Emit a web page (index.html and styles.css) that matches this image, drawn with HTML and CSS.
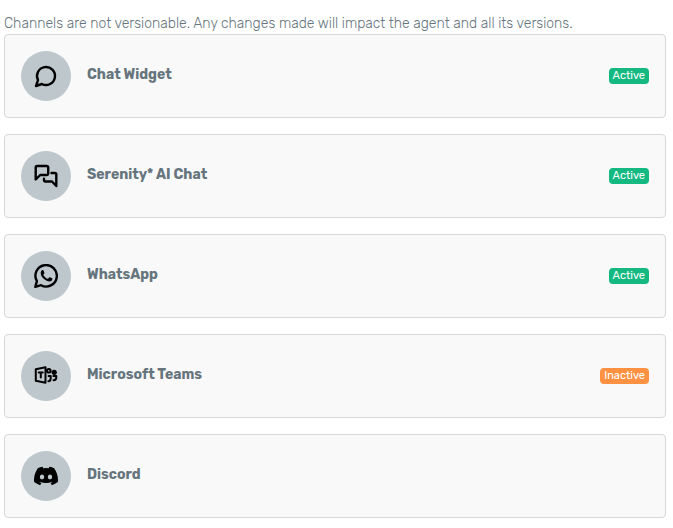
FILE: index.html
```
<!DOCTYPE html>
<html lang="en">
<head>
<meta charset="utf-8">
<meta name="viewport" content="width=device-width, initial-scale=1">
<title>Channels</title>
<link rel="stylesheet" href="styles.css">
</head>
<body>
<main class="channels">
  <p class="notice">Channels are not versionable. Any changes made will impact the agent and all its versions.</p>
  <ul class="channel-list">
    <li class="channel">
      <span class="channel-icon">
        <svg class="line-icon" viewBox="0 0 24 24" aria-hidden="true"><path d="M7.9 20A9 9 0 1 0 4 16.1L2 22Z"/></svg>
      </span>
      <h2 class="channel-name">Chat Widget</h2>
      <span class="badge badge-active">Active</span>
    </li>
    <li class="channel">
      <span class="channel-icon">
        <svg class="line-icon" viewBox="0 0 24 24" aria-hidden="true"><path d="M1.7 15.5V3.5A1.5 1.5 0 0 1 3.2 2H12.7A1.5 1.5 0 0 1 14.2 3.5V9.5A1.5 1.5 0 0 1 12.7 11H6.2Z"/><path d="M17.5 9H20.8A1.5 1.5 0 0 1 22.3 10.5V22L18 17.5H11.5A1.5 1.5 0 0 1 10 16V14.8"/></svg>
      </span>
      <h2 class="channel-name">Serenity* AI Chat</h2>
      <span class="badge badge-active">Active</span>
    </li>
    <li class="channel">
      <span class="channel-icon">
        <svg class="line-icon" viewBox="0 0 24 24" aria-hidden="true"><path d="M7 21.2A10.7 10.7 0 1 0 2.9 17.2L1.3 22.8Z"/><path class="solid" d="M8.6 6.1C9.1 6 9.4 6.2 9.6 6.7L10.4 8.7C10.6 9.1 10.4 9.4 10.2 9.7L9.5 10.5C9.3 10.8 9.3 11 9.5 11.3C10.4 12.9 11.8 14.1 13.5 14.8C13.8 14.9 14 14.9 14.2 14.6L15.2 13.4C15.5 13.1 15.7 13.1 16 13.2L18 14.2C18.4 14.4 18.5 14.6 18.4 15.1C18.2 16.8 16.8 17.6 15.4 17.6C13.9 17.6 11.4 16.4 9.7 14.8C8 13.2 6.7 11.1 6.7 9.2C6.7 7.8 7.5 6.2 8.6 6.1Z"/></svg>
      </span>
      <h2 class="channel-name">WhatsApp</h2>
      <span class="badge badge-active">Active</span>
    </li>
    <li class="channel">
      <span class="channel-icon">
        <svg class="line-icon" viewBox="0 0 24 24" aria-hidden="true"><path class="medium" d="M1.8 5.2L11.5 3.2V18.8L1.8 16.8Z"/><path class="medium" d="M4.7 8.5H8.7M6.8 8.5V13.4"/><circle class="medium" cx="14.8" cy="6.7" r="1.8"/><circle class="solid" cx="20.2" cy="8.3" r="2.6"/><path class="medium" d="M14.6 11.9H16.7V14.2C16.7 16.1 15.8 17.2 14.4 17.3M19.4 11.9H22.3V13.2C22.3 15.1 21.2 16.2 19.5 16.2"/></svg>
      </span>
      <h2 class="channel-name">Microsoft Teams</h2>
      <span class="badge badge-inactive">Inactive</span>
    </li>
    <li class="channel">
      <span class="channel-icon">
        <svg class="fill-icon" viewBox="0 0 16 16" aria-hidden="true"><path d="M13.545 2.907a13.2 13.2 0 0 0-3.257-1.011.05.05 0 0 0-.052.025c-.141.25-.297.577-.406.833a12.2 12.2 0 0 0-3.658 0 8 8 0 0 0-.412-.833.05.05 0 0 0-.052-.025c-1.125.194-2.22.534-3.257 1.011a.04.04 0 0 0-.021.018C.356 6.024-.213 9.047.066 12.032q.003.022.021.037a13.3 13.3 0 0 0 3.995 2.02.05.05 0 0 0 .056-.019q.463-.63.818-1.329a.05.05 0 0 0-.01-.059l-.018-.011a9 9 0 0 1-1.248-.595.05.05 0 0 1-.02-.066l.015-.019q.127-.095.248-.195a.05.05 0 0 1 .051-.007c2.619 1.196 5.454 1.196 8.041 0a.05.05 0 0 1 .053.007q.121.1.248.195a.05.05 0 0 1-.004.085 8 8 0 0 1-1.249.594.05.05 0 0 0-.03.03.05.05 0 0 0 .003.041c.24.465.515.909.817 1.329a.05.05 0 0 0 .056.019 13.2 13.2 0 0 0 4.001-2.02.05.05 0 0 0 .021-.037c.334-3.451-.559-6.449-2.366-9.106a.03.03 0 0 0-.02-.019m-8.198 7.307c-.789 0-1.438-.724-1.438-1.612s.637-1.613 1.438-1.613c.807 0 1.45.73 1.438 1.613 0 .888-.637 1.612-1.438 1.612m5.316 0c-.788 0-1.438-.724-1.438-1.612s.637-1.613 1.438-1.613c.807 0 1.451.73 1.438 1.613 0 .888-.631 1.612-1.438 1.612"/></svg>
      </span>
      <h2 class="channel-name">Discord</h2>
    </li>
  </ul>
</main>
</body>
</html>
```
FILE: styles.css
```
* {
  box-sizing: border-box;
}

body {
  margin: 0;
  background: #fff;
  color: #66757d;
  font-family: Rubik, Roboto, sans-serif;
  font-size: 14px;
  line-height: 20px;
}

.channels {
  padding: 14px 7px 10px 4px;
}

.notice {
  margin: 0;
  font-weight: 300;
}

.channel-list {
  display: grid;
  gap: 16px;
  margin: 0;
  padding: 0;
  list-style: none;
}

.channel {
  display: flex;
  align-items: center;
  gap: 16px;
  padding: 16px;
  border: 1px solid #d6d8d9;
  border-radius: 4px;
  background: #f9f9f9;
}

.channel-icon {
  display: grid;
  place-items: center;
  flex: none;
  width: 50px;
  height: 50px;
  border-radius: 50%;
  background: #bdc7cc;
  color: #000;
}

.line-icon,
.fill-icon {
  display: block;
  width: 24px;
  height: 24px;
}

.line-icon {
  fill: none;
  stroke: currentColor;
  stroke-width: 2.4;
  stroke-linecap: round;
  stroke-linejoin: round;
}

.fill-icon,
.line-icon .solid {
  fill: currentColor;
}

.line-icon .solid {
  stroke: none;
}

.line-icon .medium {
  stroke-width: 2;
}

.channel-name {
  flex: 1;
  margin: 0;
  padding-bottom: 2px;
  font-size: 14px;
  font-weight: 700;
}

.badge {
  padding: 0 4px;
  border-radius: 4px;
  color: #fff;
  font-size: 11px;
  font-weight: 400;
  line-height: 16px;
}

.badge-active {
  background: #13b981;
}

.badge-inactive {
  background: #ff9143;
}
```
